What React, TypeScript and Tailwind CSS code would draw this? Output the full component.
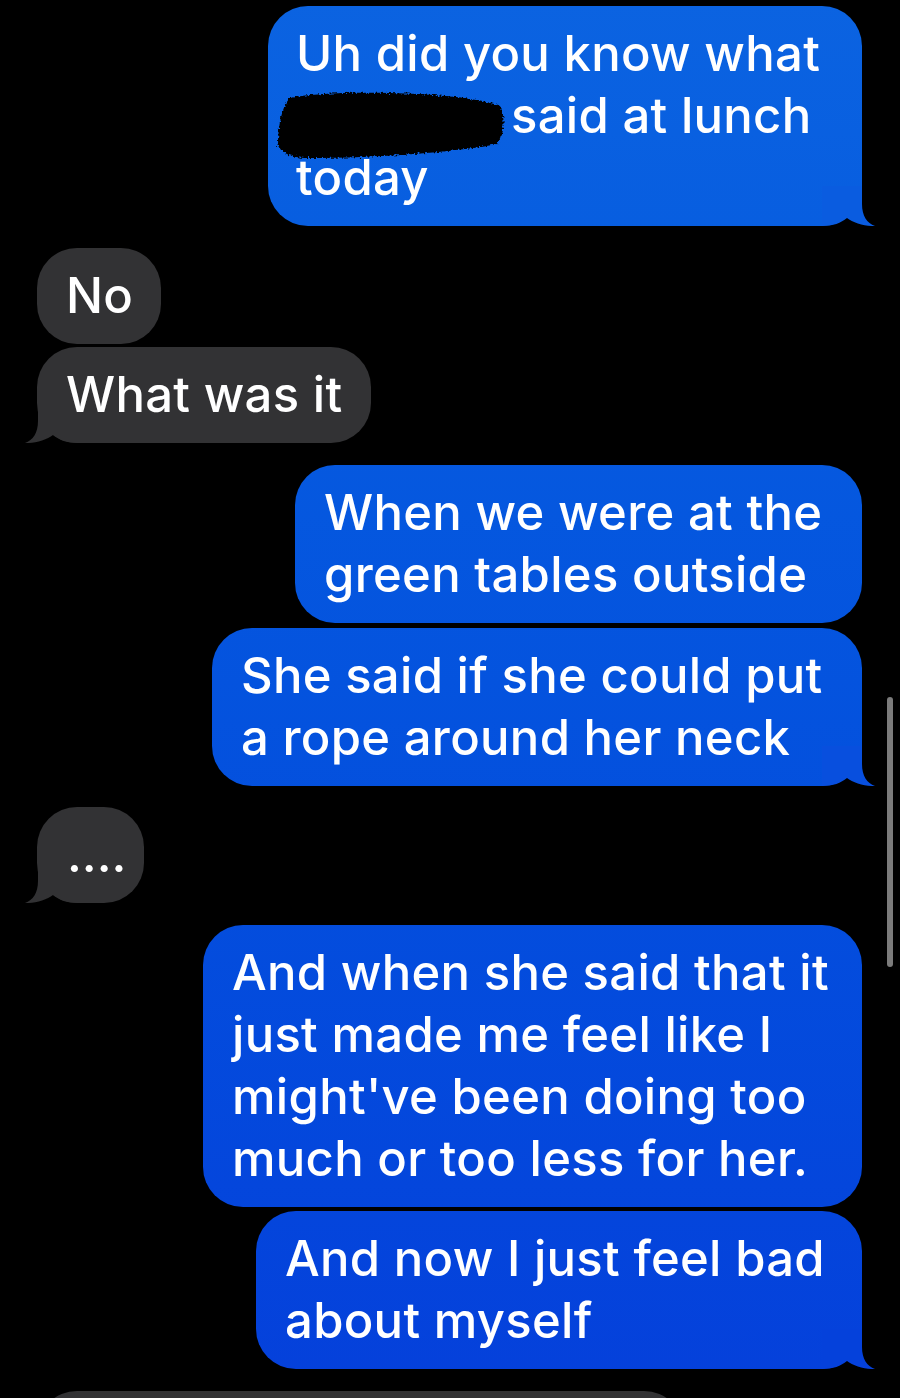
import React from "react";

const BLUE = "bg-linear-to-b from-[#0b63e1] to-[#0540db] bg-fixed";
const GREY = "bg-[#323234]";

function SentTail({ fill }: { fill: string }) {
  return (
    <svg
      className="absolute right-[-13px] bottom-0 w-[53px] h-[40px]"
      viewBox="0 0 53 40"
      aria-hidden
    >
      <path
        d="M0 0 H40 V18 C40 30 45 37 53 40 C44 40.5 31 37 25 32 C19 37 11 40 0 40 Z"
        fill={fill}
      />
    </svg>
  );
}

function RecvTail() {
  return (
    <svg
      className="absolute left-[-12px] bottom-0 w-[53px] h-[40px] -scale-x-100"
      viewBox="0 0 53 40"
      aria-hidden
    >
      <path
        d="M0 0 H40 V18 C40 30 45 37 53 40 C44 40.5 31 37 25 32 C19 37 11 40 0 40 Z"
        fill="#323234"
      />
    </svg>
  );
}

function Redaction() {
  return (
    <svg
      className="absolute left-[-18px] top-[7px] w-[225px] h-[66px] overflow-visible"
      viewBox="0 0 225 66"
      aria-hidden
    >
      <defs>
        <filter id="rough" x="-10%" y="-20%" width="120%" height="140%">
          <feTurbulence type="fractalNoise" baseFrequency="0.5" numOctaves="3" seed="7" result="n" />
          <feDisplacementMap in="SourceGraphic" in2="n" scale="6" xChannelSelector="R" yChannelSelector="G" />
          <feGaussianBlur stdDeviation="0.7" />
        </filter>
      </defs>
      <path
        d="M12 6 C40 0 90 0 140 2 C180 4 210 9 222 14 C228 26 226 44 219 52 C180 60 100 66 30 66 C10 66 0 58 0 52 C0 34 4 14 12 6 Z"
        fill="#030303"
        filter="url(#rough)"
      />
    </svg>
  );
}

export default function App() {
  const text =
    "text-white text-[49px] leading-[62px] font-medium tracking-[0.3px] whitespace-nowrap";
  return (
    <div className="relative h-[1398px] w-full overflow-hidden bg-black font-[Inter,'Noto_Sans',sans-serif]">
      <div className="flex flex-col pt-[6px] pl-[37px] pr-[38px]">
        {/* 1 */}
        <div className={`relative self-end w-[594px] rounded-[40px] ${BLUE} pl-[28px] py-[17px] ${text}`}>
          <SentTail fill="#0a5ce0" />
          <div className="relative">
            <div>Uh did you know what</div>
            <div className="flex">
              <span className="relative inline-block w-[215px]">
                <Redaction />
              </span>
              <span>said at lunch</span>
            </div>
            <div>today</div>
          </div>
        </div>

        {/* 2 */}
        <div className={`relative self-start mt-[22px] w-[124px] rounded-[40px] ${GREY} pl-[29px] py-[17px] ${text}`}>
          <div className="relative">No</div>
        </div>
        {/* 3 */}
        <div className={`relative self-start mt-[3px] w-[334px] rounded-[40px] ${GREY} pl-[29px] py-[17px] ${text}`}>
          <RecvTail />
          <div className="relative">What was it</div>
        </div>

        {/* 4 */}
        <div className={`relative self-end mt-[22px] w-[567px] rounded-[40px] ${BLUE} pl-[29px] py-[17px] ${text}`}>
          <div className="relative">
            <div>When we were at the</div>
            <div>green tables outside</div>
          </div>
        </div>
        {/* 5 */}
        <div className={`relative self-end mt-[5px] w-[650px] rounded-[40px] ${BLUE} pl-[29px] py-[17px] ${text}`}>
          <SentTail fill="#084fde" />
          <div className="relative">
            <div>She said if she could put</div>
            <div>a rope around her neck</div>
          </div>
        </div>

        {/* 6 */}
        <div className={`relative self-start mt-[21px] w-[107px] rounded-[40px] ${GREY} pl-[30px] py-[17px] ${text}`}>
          <RecvTail />
          <div className="relative tracking-[0px]">....</div>
        </div>

        {/* 7 */}
        <div className={`relative self-end mt-[22px] w-[659px] rounded-[40px] ${BLUE} pl-[29px] py-[17px] ${text}`}>
          <div className="relative">
            <div>And when she said that it</div>
            <div>just made me feel like I</div>
            <div>might've been doing too</div>
            <div>much or too less for her.</div>
          </div>
        </div>
        {/* 8 */}
        <div className={`relative self-end mt-[4px] w-[606px] rounded-[40px] ${BLUE} pl-[29px] py-[17px] ${text}`}>
          <SentTail fill="#0541db" />
          <div className="relative">
            <div>And now I just feel bad</div>
            <div>about myself</div>
          </div>
        </div>

        {/* 9 partial */}
        <div className={`relative self-start mt-[22px] w-[647px] h-[96px] rounded-[40px] ${GREY}`} />
      </div>

      {/* scroll indicator */}
      <div className="absolute left-[887px] top-[697px] h-[270px] w-[6px] rounded-full bg-[#7b7b7b]" />
    </div>
  );
}
